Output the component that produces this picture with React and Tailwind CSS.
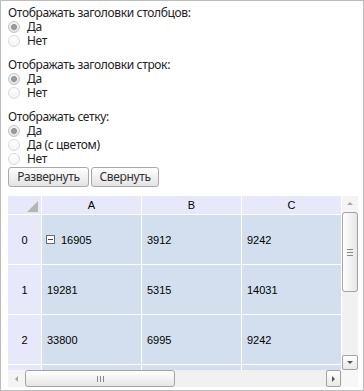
import React from "react";

const Radio = ({ checked, label }) => (
  <div className="flex items-center h-[14px] gap-[7px]">
    {checked ? (
      <div className="w-[12px] h-[12px] shrink-0 rounded-full border border-[#c4c4c4] bg-gradient-to-b from-[#f4f4f4] to-[#e2e2e2] flex items-center justify-center">
        <div className="w-[6px] h-[6px] rounded-full bg-[#9c9c9c] border border-[#8c8c8c]" />
      </div>
    ) : (
      <div className="w-[12px] h-[12px] shrink-0 rounded-full border border-[#dadada] bg-gradient-to-b from-white to-[#f4f4f4]" />
    )}
    <span className="leading-[14px]">{label}</span>
  </div>
);

const Group = ({ title, options, className = "" }) => (
  <div className={className}>
    <div className="h-[14px] leading-[14px]">{title}</div>
    {options.map((o, i) => (
      <Radio key={o} label={o} checked={i === 0} />
    ))}
  </div>
);

const Button = ({ children, className = "" }) => (
  <button
    className={`h-[20px] px-[6px] rounded-[3px] border border-[#a9a9a9] bg-gradient-to-b from-white to-[#e3e3e3] text-[#333] text-[12px] leading-[18px] ${className}`}
  >
    {children}
  </button>
);

const Arrow = ({ dir }) => {
  const pts = {
    up: "0,4 3,1 6,4",
    down: "0,1 3,4 6,1",
    left: "4,0 1,3 4,6",
    right: "1,0 4,3 1,6",
  }[dir];
  return (
    <svg width="6" height="6" viewBox="0 0 6 6">
      <polygon points={pts} fill={dir === "up" || dir === "left" ? "#a8a8a8" : "#555"} />
    </svg>
  );
};

const rows = [
  ["0", "16905", "3912", "9242", true],
  ["1", "19281", "5315", "14031"],
  ["2", "33800", "6995", "9242"],
  ["", "", "", ""],
];

export default function App() {
  return (
    <div className="w-[364px] h-[391px] border border-[#bcbcbc] bg-white overflow-hidden px-[7px] pt-[5px] font-['Noto_Sans',sans-serif] text-[12px] leading-[14px] tracking-[-0.35px] text-[#222]">
      <Group title="Отображать заголовки столбцов:" options={["Да", "Нет"]} />
      <Group className="mt-[10px]" title="Отображать заголовки строк:" options={["Да", "Нет"]} />
      <Group className="mt-[10px]" title="Отображать сетку:" options={["Да", "Да (с цветом)", "Нет"]} />
      <div className="flex gap-[2px] mt-px">
        <Button className="w-[81px]">Развернуть</Button>
        <Button className="w-[68px]">Свернуть</Button>
      </div>

      <div className="mt-[9px] w-[350px] h-[191px] flex flex-col font-['Liberation_Sans',sans-serif] text-[11px] tracking-normal text-black">
        <div className="flex h-[174px]">
          <div className="w-[334px] h-[174px] overflow-hidden bg-white">
            <div className="grid grid-cols-[33px_99px_99px_99px] grid-rows-[18px_49px_49px_49px_49px] gap-px">
              <div className="bg-[#e8e8fb] flex items-end justify-end pr-[3px] pb-[2px]">
                <svg width="11" height="11" viewBox="0 0 11 11">
                  <polygon points="11,0 11,11 0,11" fill="#b5b5b5" />
                </svg>
              </div>
              {["A", "B", "C"].map((c) => (
                <div key={c} className="bg-[#e8e8fb] flex items-center justify-center">
                  {c}
                </div>
              ))}
              {rows.map(([n, a, b, c, tree], i) => (
                <React.Fragment key={i}>
                  <div className="bg-[#e8e8fb] flex items-center justify-center">{n}</div>
                  <div className="bg-[#d3dfee] flex items-center pl-[5px]">
                    {tree && (
                      <div className="w-[9px] h-[9px] border border-[#6a6a6a] bg-white flex items-center justify-center mr-[6px] -ml-px">
                        <div className="w-[5px] h-px bg-[#444]" />
                      </div>
                    )}
                    {a}
                  </div>
                  <div className="bg-[#d3dfee] flex items-center pl-[5px]">{b}</div>
                  <div className="bg-[#d3dfee] flex items-center pl-[5px]">{c}</div>
                </React.Fragment>
              ))}
            </div>
          </div>
          <div className="w-[16px] h-[174px] bg-[#f1f1f1] flex flex-col">
            <div className="h-[16px] bg-[#f4f4f4] flex items-center justify-center">
              <Arrow dir="up" />
            </div>
            <div className="h-[80px] rounded-[3px] border border-[#a3a3a3] bg-gradient-to-r from-white to-[#e6e6e6] flex flex-col items-center justify-center gap-[2px]">
              <div className="w-[6px] h-px bg-[#888]" />
              <div className="w-[6px] h-px bg-[#888]" />
              <div className="w-[6px] h-px bg-[#888]" />
            </div>
            <div className="flex-1" />
            <div className="h-[15px] rounded-[2px] border border-[#a3a3a3] bg-gradient-to-b from-white to-[#e8e8e8] flex items-center justify-center">
              <Arrow dir="down" />
            </div>
          </div>
        </div>
        <div className="flex h-[17px]">
          <div className="w-[334px] h-[17px] bg-[#f1f1f1] flex">
            <div className="w-[17px] bg-[#f4f4f4] flex items-center justify-center">
              <Arrow dir="left" />
            </div>
            <div className="w-[150px] rounded-[3px] border border-[#a3a3a3] bg-gradient-to-b from-white to-[#e6e6e6] flex items-center justify-center gap-[2px]">
              <div className="w-px h-[6px] bg-[#888]" />
              <div className="w-px h-[6px] bg-[#888]" />
              <div className="w-px h-[6px] bg-[#888]" />
            </div>
            <div className="flex-1" />
            <div className="w-[15px] rounded-[2px] border border-[#a3a3a3] bg-gradient-to-b from-white to-[#e8e8e8] flex items-center justify-center">
              <Arrow dir="right" />
            </div>
            <div className="w-px" />
          </div>
          <div className="w-[16px] bg-[#f7f7f7]" />
        </div>
      </div>
    </div>
  );
}
